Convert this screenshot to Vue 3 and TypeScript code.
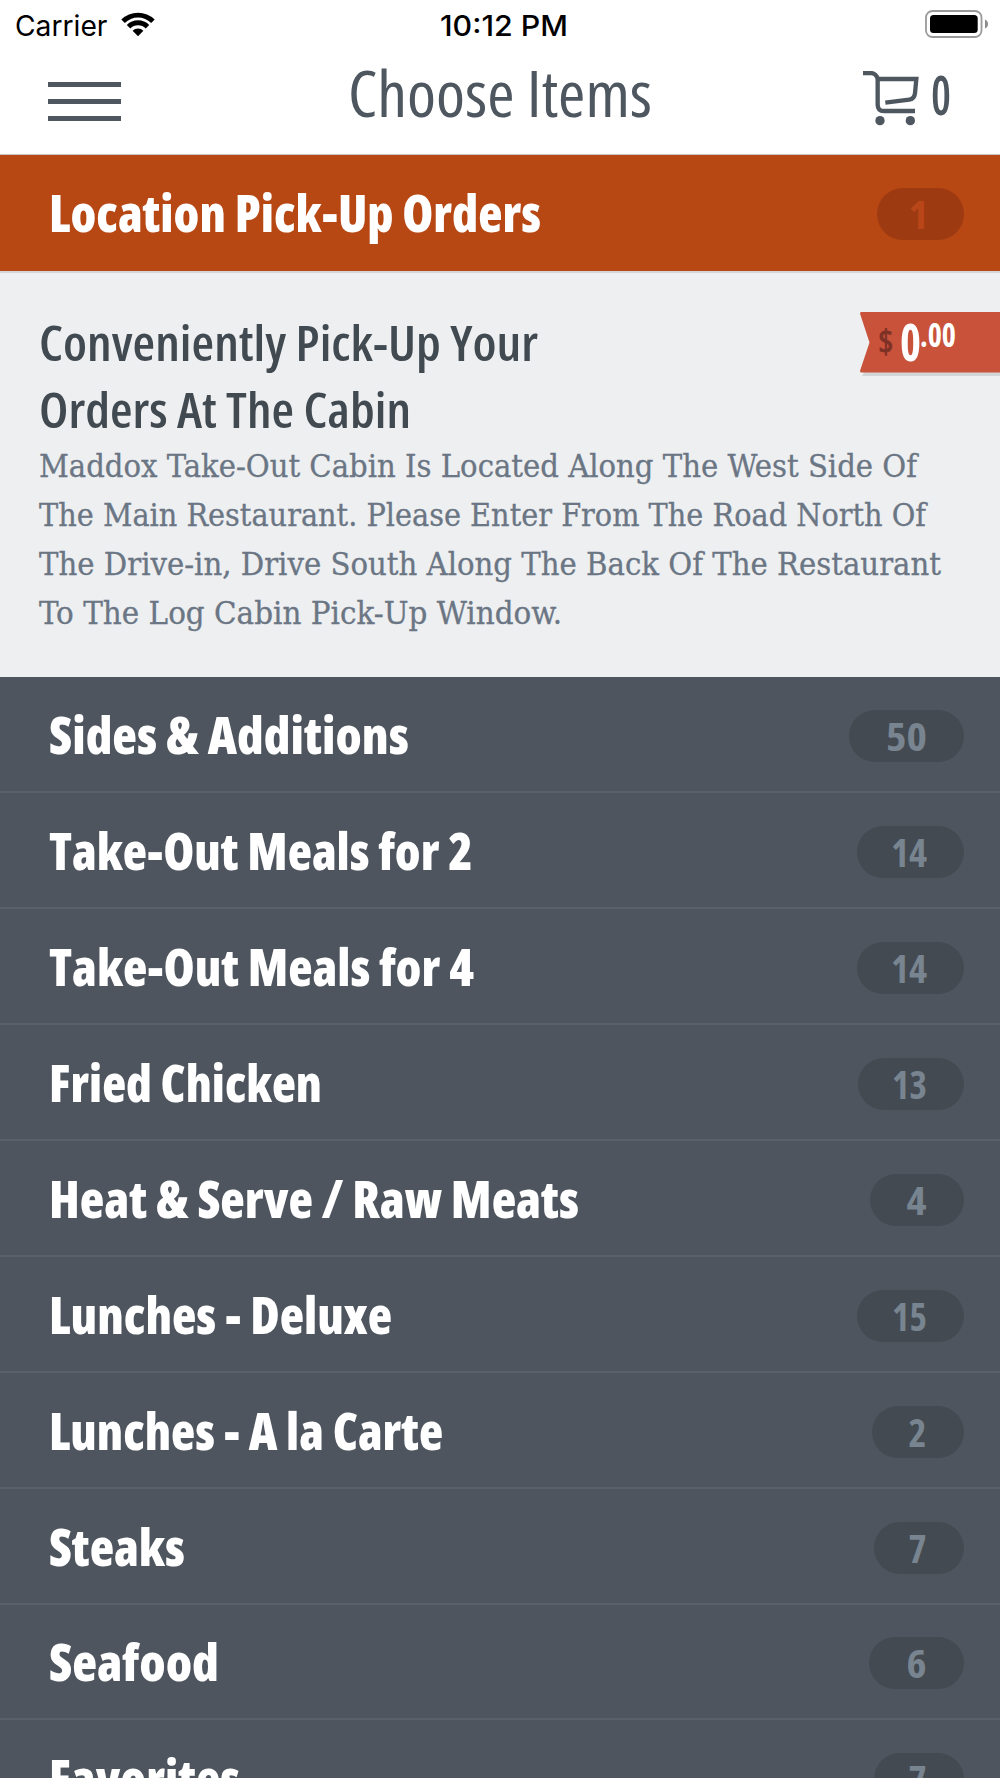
<script setup lang="ts">
import type { Directive } from 'vue'

interface Category {
  name: string
  nameWidth: number
  count: number
  countWidth: number
  badgeWidth: number
}

interface Line {
  text: string
  width: number
}

const active: Category = { name: 'Location Pick-Up Orders', nameWidth: 492, count: 1, countWidth: 20, badgeWidth: 87 }

const categories: Category[] = [
  { name: 'Sides & Additions', nameWidth: 360, count: 50, countWidth: 41, badgeWidth: 115 },
  { name: 'Take-Out Meals for 2', nameWidth: 424, count: 14, countWidth: 36, badgeWidth: 107 },
  { name: 'Take-Out Meals for 4', nameWidth: 425, count: 14, countWidth: 36, badgeWidth: 107 },
  { name: 'Fried Chicken', nameWidth: 273, count: 13, countWidth: 35, badgeWidth: 106 },
  { name: 'Heat & Serve / Raw Meats', nameWidth: 530, count: 4, countWidth: 20, badgeWidth: 94 },
  { name: 'Lunches - Deluxe', nameWidth: 343, count: 15, countWidth: 35, badgeWidth: 107 },
  { name: 'Lunches - A la Carte', nameWidth: 394, count: 2, countWidth: 18, badgeWidth: 92 },
  { name: 'Steaks', nameWidth: 136, count: 7, countWidth: 18, badgeWidth: 90 },
  { name: 'Seafood', nameWidth: 170, count: 6, countWidth: 20, badgeWidth: 95 },
  { name: 'Favorites', nameWidth: 191, count: 7, countWidth: 18, badgeWidth: 90 },
]

const heading: Line[] = [
  { text: 'Conveniently Pick-Up Your', width: 499 },
  { text: 'Orders At The Cabin', width: 372 },
]

const description: Line[] = [
  { text: 'Maddox Take-Out Cabin Is Located Along The West Side Of', width: 878 },
  { text: 'The Main Restaurant. Please Enter From The Road North Of', width: 887 },
  { text: 'The Drive-in, Drive South Along The Back Of The Restaurant', width: 902 },
  { text: 'To The Log Cabin Pick-Up Window.', width: 523 },
]

// Condenses a run of text horizontally to the given advance width.
const vFit: Directive<HTMLElement, number> = {
  mounted(el, { value }) {
    const natural = el.getBoundingClientRect().width
    el.style.transform = `scaleX(${value / natural})`
  },
}
</script>

<template>
  <main class="screen">
    <div class="status">
      <div class="carrier">
        <span v-fit="92.5" class="fit">Carrier</span>
        <svg class="wifi" viewBox="0 0 34 25" width="34" height="25">
          <path d="M0.3 7.4 A24 24 0 0 1 33.7 7.4 L30.2 10.9 A19 19 0 0 0 3.8 10.9 Z" />
          <path d="M5.8 12.9 A16 16 0 0 1 28.2 12.9 L24.7 16.4 A11 11 0 0 0 9.3 16.4 Z" />
          <path d="M11.6 18.7 A7.6 7.6 0 0 1 22.4 18.7 L17 24.2 Z" />
        </svg>
      </div>
      <span v-fit="128" class="clock fit">10:12 PM</span>
      <svg class="battery" viewBox="0 0 64 28" width="64" height="28">
        <rect x="1" y="1" width="55.500" height="26" rx="6.500" fill="#fff" stroke="#9a9a9a" stroke-width="1.800" />
        <rect x="5" y="5" width="47.700" height="18" rx="3.500" />
        <path d="M60 9.500 Q63 11 63 14 Q63 17 60 18.500 Z" fill="#8c8c8c" />
      </svg>
    </div>

    <header class="nav">
      <div class="menu"><i></i><i></i><i></i></div>
      <h1><span v-fit="304" class="fit">Choose Items</span></h1>
      <div class="cart">
        <svg viewBox="69 60 171 171" width="57" height="57" fill="none" stroke="#4e575f" stroke-width="13">
          <path d="M69 69.500H94Q104 70 110 79Q113 83 113 90V164Q113 183 132 183H225" />
          <path d="M113 87H229L225 130Q223 147 208 149L136 158" />
          <circle cx="120" cy="212" r="14" fill="#4e575f" stroke="none" />
          <circle cx="211" cy="212" r="14" fill="#4e575f" stroke="none" />
        </svg>
        <span v-fit="20" class="fit">0</span>
      </div>
    </header>

    <section class="row active">
      <span v-fit="active.nameWidth" class="name fit">{{ active.name }}</span>
      <span class="badge" :style="{ width: active.badgeWidth + 'px' }">
        <b v-fit="active.countWidth" class="fit">{{ active.count }}</b>
      </span>
    </section>

    <section class="details">
      <h2>
        <span v-for="line in heading" :key="line.text" v-fit="line.width" class="fit">{{ line.text }}</span>
      </h2>
      <p>
        <span v-for="line in description" :key="line.text" v-fit="line.width" class="fit">{{ line.text }}</span>
      </p>
      <div class="tag">
        <svg viewBox="0 0 140 66" width="140" height="66">
          <path d="M5 59H140V64H2Z" fill="#d3d4d6" />
          <path d="M1.500 0H140V60.500H1.500Q-0.500 60.500 0.300 58L9.500 30.500L0.300 2.500Q-0.500 0 1.500 0Z" fill="#c9523b" />
        </svg>
        <div class="price">
          <span v-fit="15.5" class="currency fit">$</span>
          <span v-fit="21" class="whole fit">0</span>
          <span v-fit="36" class="cents fit">.00</span>
        </div>
      </div>
    </section>

    <section v-for="item in categories" :key="item.name" class="row">
      <span v-fit="item.nameWidth" class="name fit">{{ item.name }}</span>
      <span class="badge" :style="{ width: item.badgeWidth + 'px' }">
        <b v-fit="item.countWidth" class="fit">{{ item.count }}</b>
      </span>
    </section>
  </main>
</template>

<style>
body {
  margin: 0;
  background: #4e555f;
}
</style>

<style scoped>
.screen {
  width: 1000px;
  height: 1778px;
  overflow: hidden;
  background: #4e555f;
  font-family: "Open Sans", "Noto Sans", sans-serif;
  font-stretch: 75%;
}

.fit {
  display: block;
  width: max-content;
  white-space: pre;
  transform-origin: left center;
}

.status {
  display: grid;
  grid-template-columns: 440px 1fr auto;
  align-items: center;
  box-sizing: border-box;
  height: 51px;
  padding: 0 11px 2px 0;
  background: #fff;
  color: #000;
  font-family: Inter, "Liberation Sans", sans-serif;
  font-size: 28px;
}

.carrier {
  display: grid;
  grid-template-columns: 106px auto;
  justify-content: start;
  align-items: center;
  padding-left: 15px;
}

.carrier .fit,
.clock {
  padding-top: 2px;
}

.clock {
  font-weight: 550;
}

.battery {
  margin-top: -1px;
}

.nav {
  display: grid;
  grid-template-columns: 348px 1fr 137px;
  box-sizing: border-box;
  height: 104px;
  border-bottom: 1px solid #c9c4c1;
  background: #fff;
  color: #4e575f;
}

.menu {
  display: flex;
  flex-direction: column;
  gap: 12px;
  padding: 31px 0 0 48px;
}

.menu i {
  width: 73px;
  height: 5px;
  background: #4e575f;
}

h1 {
  margin: 0;
  font-size: 63.5px;
  font-weight: 400;
  line-height: 84px;
}

.cart {
  display: grid;
  grid-template-columns: 68px auto;
  justify-content: start;
  padding-top: 19px;
  font-size: 54px;
  font-weight: 600;
  line-height: 48px;
}

.row {
  display: flex;
  justify-content: space-between;
  align-items: center;
  box-sizing: border-box;
  height: 115.95px;
  padding: 0 36px 0 49px;
  border-bottom: 2px solid #59606b;
  background: #4e555f;
  color: #fff;
}

.name {
  font-size: 51px;
  font-weight: 800;
  line-height: 60px;
}

.badge {
  display: flex;
  justify-content: flex-end;
  flex: none;
  box-sizing: border-box;
  height: 52px;
  margin-top: 4px;
  padding-right: 37px;
  border-radius: 26px;
  background: #444a51;
  color: #788490;
  font-size: 39.5px;
  line-height: 52px;
}

.badge .fit {
  font-weight: 700;
  transform-origin: right center;
}

.active {
  height: 118px;
  padding-bottom: 3px;
  border-bottom-color: #d5d6d9;
  background: #b74713;
}

.active .badge {
  padding-right: 35px;
  background: #9e3a11;
  color: #b94618;
}

.details {
  position: relative;
  box-sizing: border-box;
  height: 404px;
  padding: 36px 0 0 39px;
  background: #eeeff1;
}

h2 {
  margin: 0;
  color: #414a51;
  font-size: 49.5px;
  font-weight: 600;
  line-height: 66.5px;
}

p {
  margin: 0;
  color: #6b7684;
  font-family: "DejaVu Serif", serif;
  font-size: 32.5px;
  line-height: 49px;
  -webkit-text-stroke: 0.3px #6b7684;
}

.tag {
  position: absolute;
  top: 39px;
  right: 0;
  width: 140px;
  height: 66px;
}

.tag svg {
  display: block;
}

.price {
  position: absolute;
  inset: 0;
  display: grid;
  grid-template-columns: 22px 20px auto;
  justify-content: start;
  padding-left: 18px;
  color: #fff;
  font-weight: 700;
}

.currency {
  color: #803126;
  font-size: 33px;
  line-height: 60px;
}

.whole {
  font-size: 52px;
  line-height: 58px;
}

.cents {
  font-size: 33px;
  line-height: 46px;
}
</style>
